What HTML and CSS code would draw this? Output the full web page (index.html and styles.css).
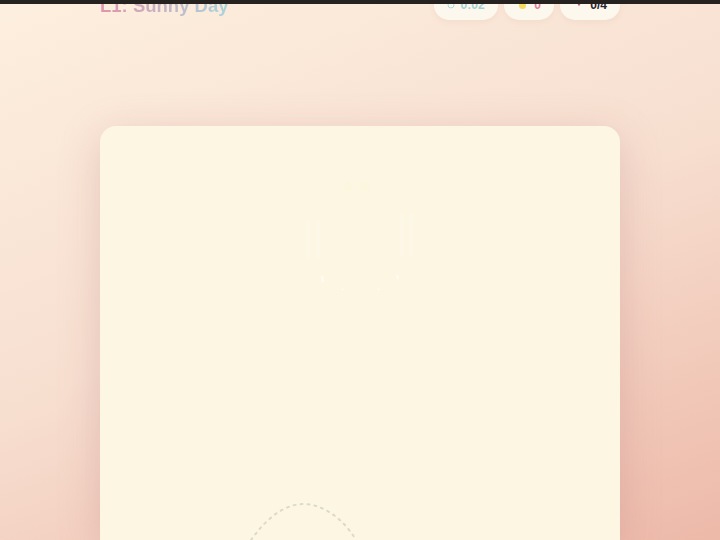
FILE: index.html
```html
<!DOCTYPE html>
<html lang="en">
<head>
<meta charset="utf-8">
<title>L1: Sunny Day</title>
<link rel="stylesheet" href="styles.css">
</head>
<body>
<div class="topbar"></div>
<main class="game">
  <header class="hud">
    <h1 class="title">L1: Sunny Day</h1>
    <div class="pills">
      <div class="pill pill-time"><span class="slot slot-time"><svg class="ico" viewBox="0 0 12 12"><circle cx="6" cy="6" r="4.500" fill="none" stroke="#a8d8d8" stroke-width="1.400"/></svg></span><span class="time">0:02</span></div>
      <div class="pill"><span class="slot"><span class="dot"></span></span><span class="score">0</span></div>
      <div class="pill"><span class="slot"><svg class="ico" viewBox="0 0 12 12"><path d="M6 8 L3 3 Q2.500 -1 4.500 -1 L7.500 -1 Q9.500 -1 9 3 Z" fill="#b8587a"/></svg></span><span class="count">0/4</span></div>
    </div>
  </header>
  <section class="canvas">
    <svg class="art" viewBox="0 0 520 414">
      <path class="mark" d="M208 94 V132 M218 94 V132 M302 88 V130 M311 88 V130"/>
      <circle class="eye" cx="248" cy="61" r="5"/>
      <circle class="eye" cx="265" cy="61" r="5"/>
      <path class="glint" d="M222 150 L223 156 M297 149 L298 153 M242 163 L243 164 M278 163 L279 164"/>
      <path class="guide" d="M151 414 C168 390 186 378 204 378 C222 378 243 392 256 414"/>
    </svg>
  </section>
</main>
</body>
</html>
```
FILE: styles.css
```css
html, body { margin: 0; height: 100%; }
body {
  height: 540px;
  overflow: hidden;
  background: linear-gradient(158deg, #fdefdf 0%, #f7dfd0 50%, #edb9a9 100%);
  font-family: "Liberation Sans", Arial, sans-serif;
}
.topbar { position: relative; z-index: 2; height: 4px; background: #26221f; }
.game { width: 520px; margin: -14px auto 0 100px; }
.hud { display: flex; justify-content: space-between; align-items: center; height: 30px; }
.title {
  margin: 0;
  padding-top: 2px;
  font-size: 18.500px;
  font-weight: 700;
  line-height: 20px;
  color: transparent;
  background: linear-gradient(90deg, #e094ae, #aad4dc);
  -webkit-background-clip: text;
  background-clip: text;
}
.pills { display: flex; gap: 6px; }
.pill {
  display: flex; align-items: center; gap: 6px;
  height: 30px; padding: 0 13px; box-sizing: border-box;
  background: #fdf8ee; border-radius: 15px;
  font-size: 12px; font-weight: 700;
  box-shadow: 0 2px 6px rgba(200,150,130,.12);
}
.pill-time { padding: 0 13px 0 12.500px; }
.slot { display: flex; justify-content: center; align-items: center; width: 11.500px; }
.slot-time { width: 8px; }
.ico { width: 8px; height: 8px; flex: none; overflow: visible; }
.dot { width: 7px; height: 7px; border-radius: 50%; background: #f5dc5e; }
.time { color: #a6d2d2; }
.score { color: #e0809c; }
.count { color: #2a2530; }
.canvas {
  margin-top: 106px;
  height: 414px;
  background: #fdf6e3;
  border-radius: 16px 16px 0 0;
  box-shadow: 0 10px 40px rgba(180,110,120,.28);
}
.art { display: block; width: 520px; height: 414px; }
.mark { fill: none; stroke: #fdf7e8; stroke-width: 4; }
.eye { fill: #fdf6de; }
.glint { fill: none; stroke: #fffcf4; stroke-width: 2; }
.guide { fill: none; stroke: #dcdacb; stroke-width: 2; stroke-dasharray: 2 5; stroke-linecap: round; }
```
